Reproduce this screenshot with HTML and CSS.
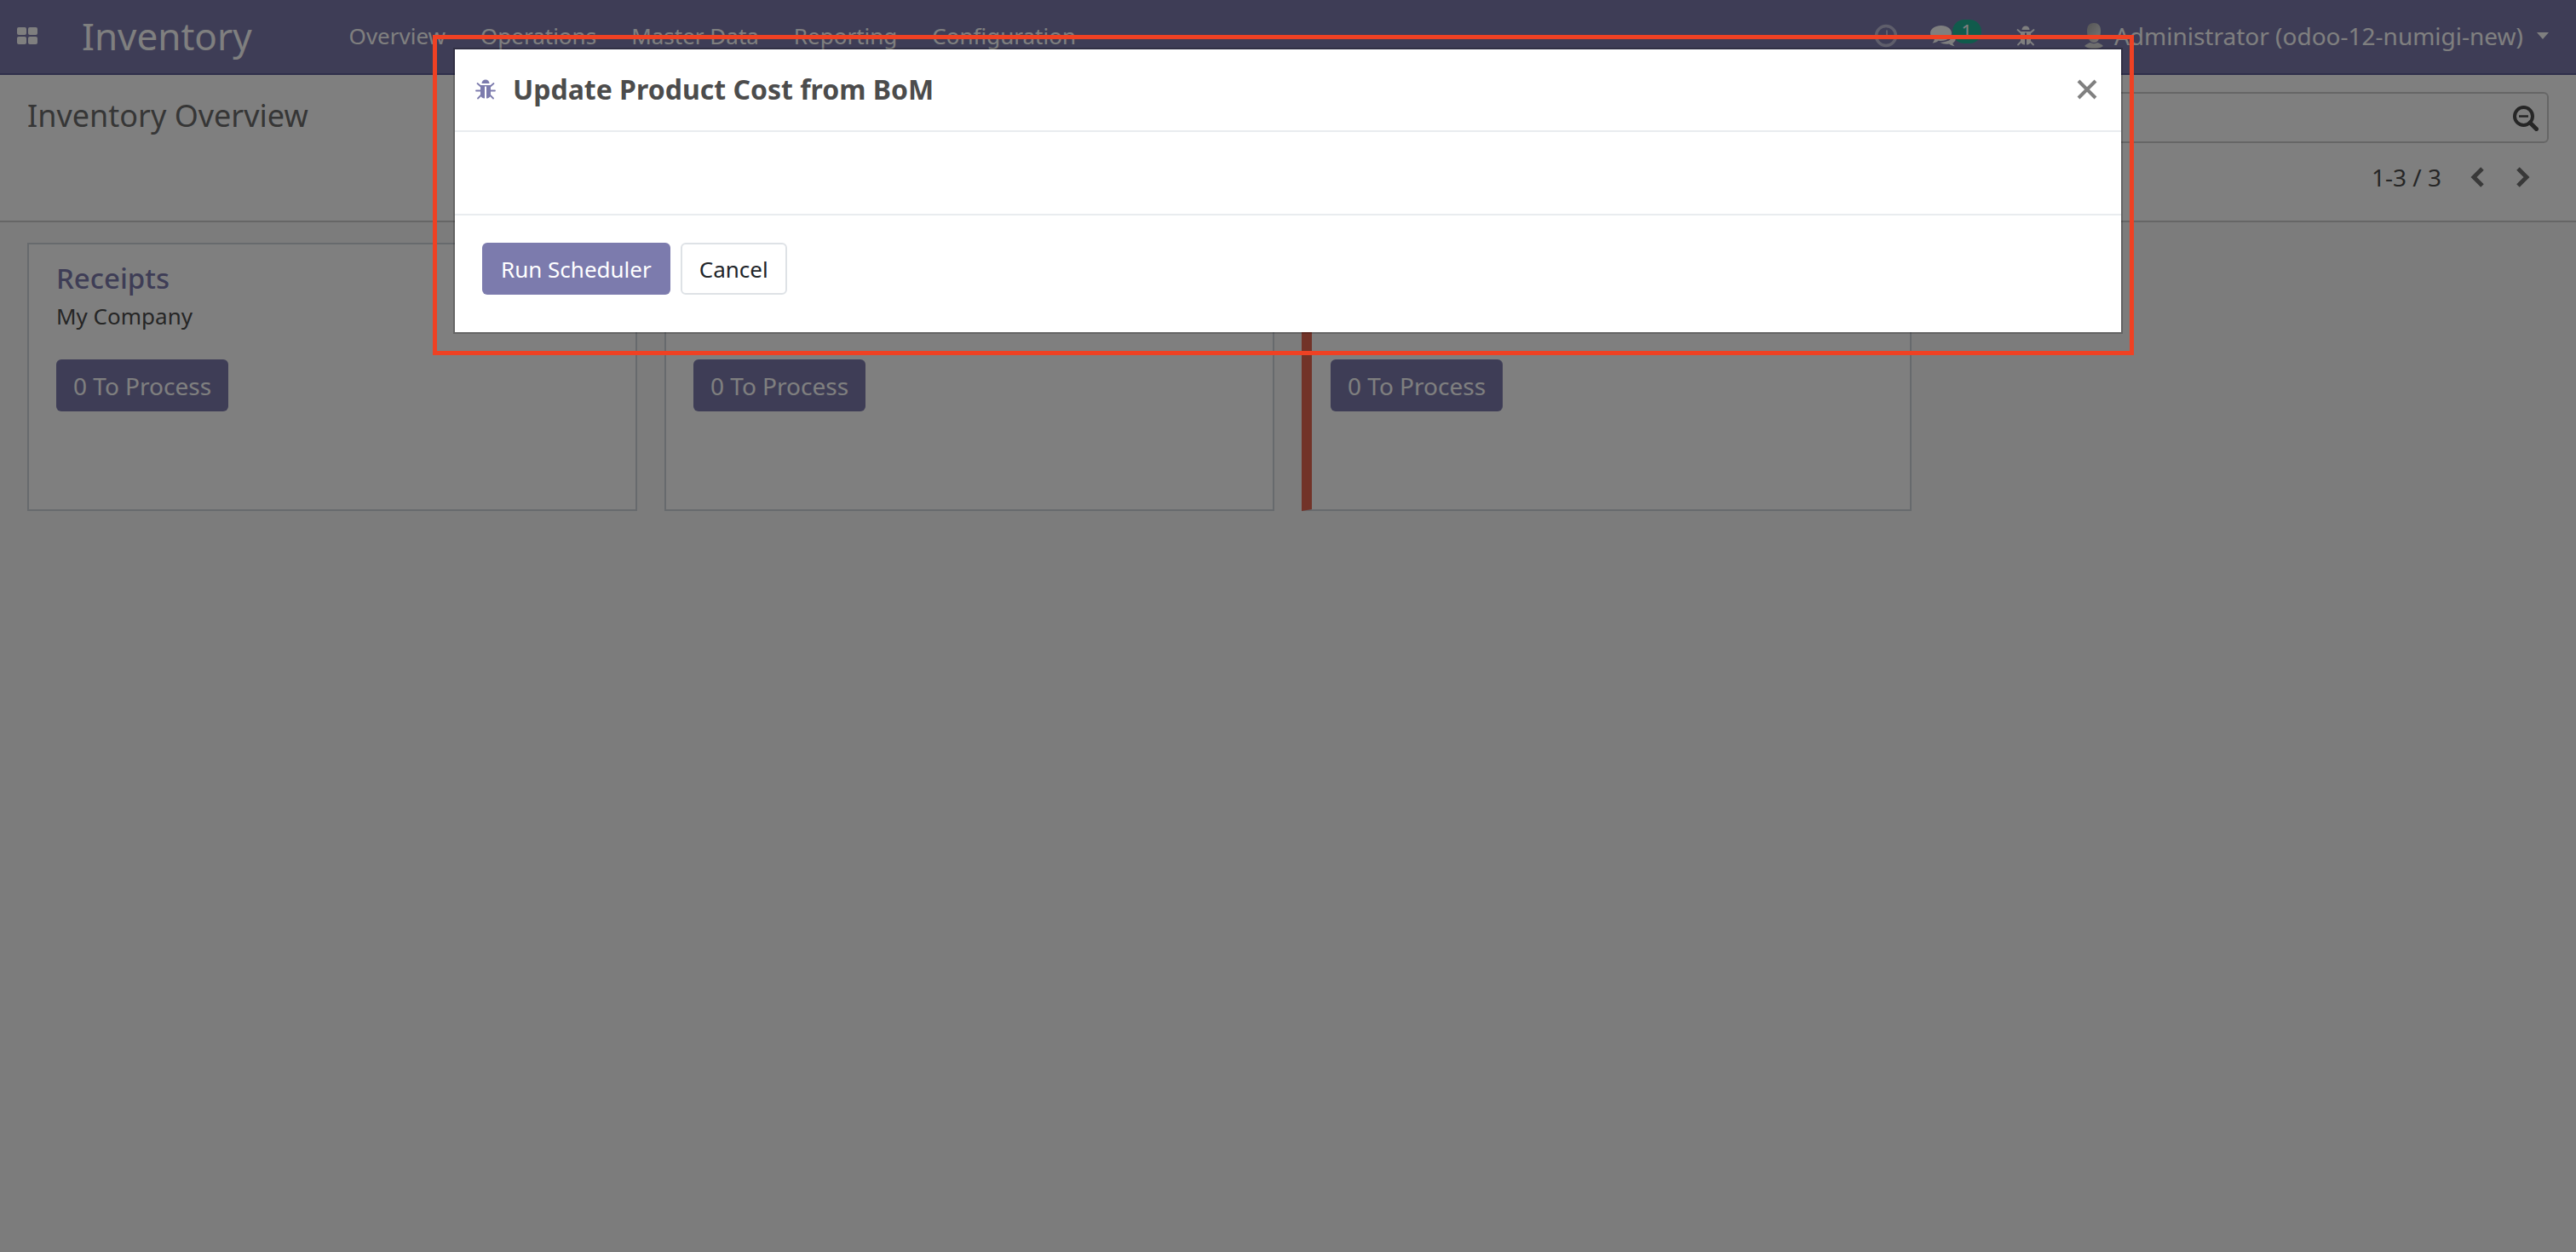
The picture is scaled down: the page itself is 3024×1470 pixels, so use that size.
FILE: index.html
```html
<!DOCTYPE html>
<html lang="en">
<head>
<meta charset="utf-8">
<title>Inventory Overview</title>
<link rel="stylesheet" href="styles.css">
</head>
<body>
<svg class="sprite" aria-hidden="true">
  <symbol id="bug" viewBox="0 0 24 24">
    <path d="M7.500 5a4.500 4.500 0 0 1 9 0z"/>
    <path d="M6 7h12v11c0 2.500-2 4.500-5 4.500V8.500h-2v14C8 22.500 6 20.500 6 18z"/>
    <path d="M2.500 5l4 3.500M21.500 5l-4 3.500M1 13.500h5M23 13.500h-5M3 22.500l4-4M21 22.500l-4-4" fill="none" stroke="currentColor" stroke-width="1.800" stroke-linecap="round"/>
  </symbol>
</svg>

<header class="navbar">
  <button class="apps" type="button" aria-label="Applications">
    <svg viewBox="0 0 24 20"><rect width="11" height="9" rx="2"/><rect x="13" width="11" height="9" rx="2"/><rect y="11" width="11" height="9" rx="2"/><rect x="13" y="11" width="11" height="9" rx="2"/></svg>
  </button>
  <a class="brand" href="#">Inventory</a>
  <nav class="menu">
    <a href="#">Overview</a>
    <a href="#">Operations</a>
    <a href="#">Master Data</a>
    <a href="#">Reporting</a>
    <a href="#">Configuration</a>
  </nav>
  <div class="systray">
    <button class="tray clock" type="button" aria-label="Activities">
      <svg viewBox="0 0 28 28"><circle cx="14" cy="14" r="11.500" fill="none" stroke="currentColor" stroke-width="3.500"/><path d="M15 7.500v8h-5" fill="none" stroke="currentColor" stroke-width="2"/></svg>
    </button>
    <button class="tray chat" type="button" aria-label="Conversations">
      <svg viewBox="0 0 30 26"><path d="M12.500 1C19 1 25 4.500 25 10s-6 9-12.500 9c-1 0-2-.1-3-.3C7.500 20.500 5 21.300 2.500 21.500c1.300-1.300 2-2.500 2.300-4.200C2 15.600 0 13 0 10c0-5.500 6-9 12.500-9z"/><path d="M27 11c1.500 1.200 3 3 3 5 0 2.300-1.500 4.200-3.700 5.500.3 1.500 1 2.500 2.200 3.700-2.500-.2-4.700-1-6.500-2.600-4 .7-8-.1-10.700-2C18 21 26.500 18 27 11z"/></svg>
      <span class="count">1</span>
    </button>
    <button class="tray debug" type="button" aria-label="Developer tools"><svg><use href="#bug"/></svg></button>
    <button class="user" type="button">
      <svg class="avatar" viewBox="0 0 24 30">
        <defs><linearGradient id="face" x1="0" y1="0" x2="1" y2="1"><stop offset="0" stop-color="#aaa"/><stop offset="1" stop-color="#eee"/></linearGradient></defs>
        <path fill="url(#face)" d="M12 0c5 0 8 3 8 9s-2 14-8 14S4 15 4 9s3-9 8-9z"/><path d="M1 27c2-2 5-3.500 7-4 2 1.500 6 1.500 8 0 2 .5 5 2 7 4-3 2.500-7 3-11 3S4 29.500 1 27z"/>
      </svg>
      <span>Administrator (odoo-12-numigi-new)</span>
      <span class="caret"></span>
    </button>
  </div>
</header>

<section class="control-panel">
  <h1>Inventory Overview</h1>
  <div class="tools">
    <div class="search">
      <input type="text" aria-label="Search">
      <button type="button" aria-label="Search options">
        <svg viewBox="0 0 30 30"><circle cx="12.500" cy="12.500" r="10.500" fill="none" stroke="currentColor" stroke-width="4"/><path d="M7 12.500h11" stroke="currentColor" stroke-width="2.500"/><path d="M20 20l7.500 7.500" stroke="currentColor" stroke-width="5" stroke-linecap="round"/></svg>
      </button>
    </div>
    <div class="pager">
      <span>1-3 / 3</span>
      <button type="button" aria-label="Previous"><svg viewBox="0 0 16 24"><path d="M14 2L4 12l10 10"/></svg></button>
      <button type="button" aria-label="Next"><svg viewBox="0 0 16 24"><path d="M2 2l10 10L2 22"/></svg></button>
    </div>
  </div>
</section>

<main class="kanban">
  <article class="card">
    <h2><a href="#">Receipts</a></h2>
    <p>My Company</p>
    <button class="btn primary" type="button">0 To Process</button>
  </article>
  <article class="card">
    <h2>&nbsp;</h2>
    <p>&nbsp;</p>
    <button class="btn primary" type="button">0 To Process</button>
  </article>
  <article class="card flagged">
    <h2>&nbsp;</h2>
    <p>&nbsp;</p>
    <button class="btn primary" type="button">0 To Process</button>
  </article>
</main>

<div class="backdrop">
  <div class="highlight">
    <div class="modal" role="dialog" aria-modal="true" aria-labelledby="dialog-title">
      <header class="modal-header">
        <svg class="modal-bug"><use href="#bug"/></svg>
        <h3 id="dialog-title">Update Product Cost from BoM</h3>
        <button class="close" type="button" aria-label="Close"><svg viewBox="0 0 24 24"><path d="M2 2l20 20M22 2L2 22"/></svg></button>
      </header>
      <div class="modal-body"></div>
      <footer class="modal-footer">
        <button class="btn primary" type="button">Run Scheduler</button>
        <button class="btn secondary" type="button">Cancel</button>
      </footer>
    </div>
  </div>
</div>
</body>
</html>
```
FILE: styles.css
```css
* { box-sizing: border-box; }

body {
  margin: 0;
  min-height: 100vh;
  background: #f9f9f9;
  color: #4c4c4c;
  font: 26px/40px "Noto Sans", "Open Sans", sans-serif;
}

h1, h2, h3, p { margin: 0; font-weight: 400; }
a { color: inherit; text-decoration: none; }
button { padding: 0; border: 0; background: none; color: inherit; font: inherit; }
svg { display: block; fill: currentColor; }
.sprite { position: absolute; width: 0; height: 0; }

.navbar {
  display: flex;
  align-items: center;
  height: 88px;
  padding: 0 32px 2px 20px;
  border-bottom: 2px solid #5f5e97;
  background: #7c7bad;
  color: #fff;
}
.apps svg { width: 24px; height: 20px; }
.brand { margin-left: 52px; font-size: 44px; }
.menu { display: flex; gap: 41px; margin-left: 114px; }
.systray { display: flex; align-items: center; margin-left: auto; }
.clock { opacity: .5; }
.clock svg { width: 28px; height: 28px; }
.chat { display: flex; margin-left: 38px; }
.chat svg { width: 30px; height: 26px; }
.count {
  width: 34px;
  height: 28px;
  margin: -6px 0 0 -4px;
  border-radius: 14px;
  background: #21b799;
  font-size: 22px;
  line-height: 26px;
}
.debug { margin-left: 40px; }
.debug svg { width: 24px; height: 24px; }
.user { display: flex; align-items: center; margin-left: 56px; font-size: 28px; }
.avatar { width: 24px; height: 30px; margin-right: 12px; fill: #ddd; }
.caret { margin-left: 16px; border: 7px solid transparent; border-top: 8px solid; border-bottom: 0; }

.control-panel {
  display: flex;
  justify-content: space-between;
  min-height: 173px;
  padding: 20px 32px;
  border-bottom: 2px solid #ccc;
  background: #fff;
}
.control-panel h1 { color: #6c6c6c; font-size: 36px; line-height: 56px; }
.tools { width: 49%; }
.search {
  display: flex;
  align-items: center;
  height: 60px;
  padding: 2px 10px 0;
  border: 2px solid #ccc;
  border-radius: 6px;
}
.search input { flex: 1; border: 0; outline: 0; background: none; font: inherit; }
.search button { color: #4c4c4c; }
.search svg { width: 30px; height: 30px; }
.pager { display: flex; align-items: center; justify-content: flex-end; gap: 38px; padding: 20px 22px 0 0; font-size: 28px; }
.pager span { margin-right: -4px; }
.pager svg { width: 16px; height: 24px; fill: none; stroke: #737373; stroke-width: 5px; }

.kanban { display: grid; grid-template-columns: repeat(auto-fill, 716px); gap: 32px; padding: 24px 32px; }
.card { min-height: 315px; padding: 16px 32px; border: 2px solid #ced4da; background: #fff; }
.card h2 { color: #7c7bad; font-size: 33px; font-weight: 500; line-height: 48px; }
.card p { margin-bottom: 31px; }
.card .btn { font-size: 28px; }
.flagged { padding-left: 22px; border-left: 12px solid #e46651; }

.btn { height: 61px; padding: 0 20px; border-radius: 6px; }
.primary { background: #7c7bad; color: #fff; }
.secondary { border: 2px solid #dee2e6; background: #fff; color: #212529; }
.modal .primary { padding: 0 22px; }

.backdrop {
  position: absolute;
  inset: 0;
  padding: 41px 11px 0 0;
  background: rgba(0, 0, 0, .5);
}
.highlight { width: 1997px; max-width: 100%; margin: 0 auto; padding: 12px 10px 22px 21px; border: 5px solid #ef4123; }
.modal { background: #fff; box-shadow: 0 0 0 2px rgba(0, 0, 0, .2); }
.modal-header { display: flex; align-items: center; height: 97px; padding: 0 28px 2px 24px; border-bottom: 2px solid #e9ecef; }
.modal-bug { width: 24px; height: 24px; margin-right: 20px; color: #7c7bad; }
.modal-header h3 { font-size: 32px; font-weight: 700; }
.close { margin-left: auto; }
.close svg { width: 24px; height: 24px; stroke: #808080; stroke-width: 4px; }
.modal-body { height: 96px; }
.modal-footer { display: flex; gap: 12px; padding: 32px 32px 44px; border-top: 2px solid #e9ecef; }
```
